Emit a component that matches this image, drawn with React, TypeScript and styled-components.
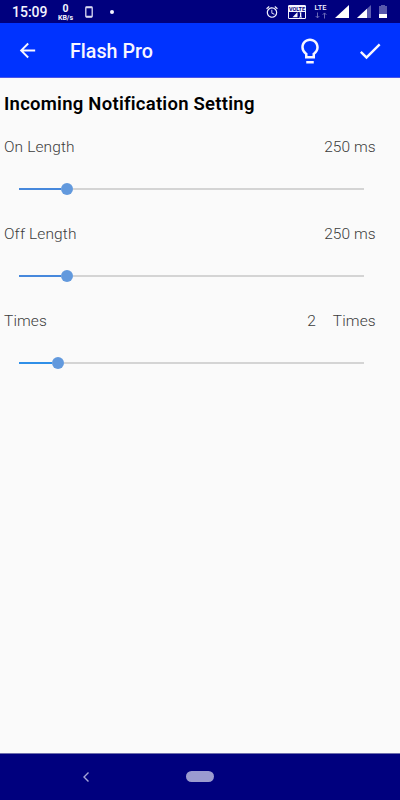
import React from "react";
import styled, { createGlobalStyle } from "styled-components";

const GlobalStyle = createGlobalStyle`
  *, *::before, *::after { box-sizing: border-box; }
  body { margin: 0; background: #fafafa; font-family: Roboto, sans-serif; }
`;

const Screen = styled.div`
  display: flex;
  flex-direction: column;
  width: 400px;
  height: 800px;
  overflow: hidden;
  background: #fafafa;
`;

const StatusBar = styled.header`
  display: flex;
  justify-content: space-between;
  height: 23px;
  padding: 0 13px 0 12px;
  background: #00007e;
  color: #f4f4ff;
`;

const StatusGroup = styled.div`
  display: flex;
  align-items: center;
  height: 23px;
  svg { display: block; flex: none; }
`;

const Clock = styled.span`
  width: 46px;
  font-size: 14px;
  line-height: 23px;
  font-weight: 500;
  padding-top: 2px;
  white-space: nowrap;
`;

const NetSpeed = styled.span`
  display: flex;
  flex-direction: column;
  align-items: center;
  width: 15px;
  font-weight: 700;
  padding-top: 2px;
`;

const NetValue = styled.span`
  font-size: 10.5px;
  line-height: 10px;
`;

const NetUnit = styled.span`
  font-size: 7px;
  line-height: 8px;
`;

const Spacer = styled.span<{ $w: number }>`
  flex: none;
  width: ${(p) => p.$w}px;
`;

const Dot = styled.span`
  width: 4px;
  height: 4px;
  border-radius: 50%;
  background: #f4f4ff;
`;

const Volte = styled.span`
  display: flex;
  flex-direction: column;
  align-items: center;
  width: 18px;
  height: 14px;
  border: 1px solid #f4f4ff;
  border-radius: 1px;
  background: #f4f4ff;
  color: #00007e;
  font-size: 5.5px;
  line-height: 6px;
  font-weight: 700;
`;

const Lte = styled.span`
  display: flex;
  flex-direction: column;
  align-items: center;
  width: 13px;
  font-size: 7.4px;
  line-height: 8px;
  font-weight: 500;
`;

const AppBar = styled.nav`
  display: flex;
  align-items: center;
  height: 55px;
  padding: 2px 16px 0 16px;
  background: #0033ff;
  border-bottom: 1px solid #4a55e8;
  color: #f8f6ff;
  svg { display: block; flex: none; }
`;

const BackButton = styled.button`
  display: block;
  margin-top: -2px;
  padding: 0;
  border: 0;
  background: none;
  color: inherit;
`;

const Title = styled.h1`
  flex: 1;
  margin: 1px 0 0 31px;
  font-size: 19.7px;
  line-height: 24px;
  font-weight: 500;
`;

const IconButton = styled.button`
  display: block;
  padding: 0;
  border: 0;
  background: none;
  color: inherit;
  & + & { margin-left: 31px; }
`;

const Content = styled.main`
  flex: 1;
  padding: 14px 0 0 4px;
`;

const Heading = styled.h2`
  margin: 0;
  font-size: 18.5px;
  line-height: 24px;
  font-weight: 600;
  letter-spacing: 0.25px;
  color: #000;
  white-space: nowrap;
`;

const Setting = styled.section`
  height: 86.7px;
  padding-top: 21.2px;
`;

const SettingLabel = styled.div`
  display: flex;
  justify-content: space-between;
  padding-right: 24.2px;
  font-size: 15.5px;
  line-height: 20px;
  font-weight: 300;
  letter-spacing: 0.12px;
  color: #3c3c3c;
`;

const Amount = styled.span<{ $gap: number }>`
  display: flex;
  gap: ${(p) => p.$gap}px;
`;

const Slider = styled.div`
  display: flex;
  align-items: center;
  width: 345px;
  height: 12px;
  margin: 26.1px 0 0 15px;
`;

const Fill = styled.div<{ $bright?: boolean }>`
  height: 2px;
  background: ${(p) => (p.$bright ? "#2f8fe8" : "#4688dc")};
`;

const Thumb = styled.div`
  width: 12px;
  height: 12px;
  border-radius: 50%;
  background: #6299dd;
`;

const Rest = styled.div`
  flex: 1;
  height: 2px;
  background: #d4d4d4;
`;

const NavBar = styled.footer`
  display: flex;
  align-items: center;
  height: 47px;
  padding-left: 82px;
  background: #00007e;
  border-top: 1px solid #6e6eac;
`;

const HomePill = styled.span`
  width: 28px;
  height: 11px;
  margin: -1px 0 0 96px;
  border-radius: 6px;
  background: #9b9bd0;
`;

const settings = [
  { label: "On Length", value: "250", unit: "ms", gap: 3.7, position: 41.5, bright: false },
  { label: "Off Length", value: "250", unit: "ms", gap: 3.7, position: 41.5, bright: false },
  { label: "Times", value: "2", unit: "Times", gap: 17, position: 32.5, bright: true },
];

export default function App() {
  return (
    <Screen>
      <GlobalStyle />
      <StatusBar>
        <StatusGroup>
          <Clock>15:09</Clock>
          <NetSpeed>
            <NetValue>0</NetValue>
            <NetUnit>KB/s</NetUnit>
          </NetSpeed>
          <Spacer $w={12} />
          <svg width="8" height="12" viewBox="0 0 8 12">
            <rect x="0.8" y="1" width="6.4" height="10" rx="0.8" fill="none" stroke="#d9d9f2" strokeWidth="1.3" />
            <path d="M1 1.4h6M1 10.4h6" stroke="#d9d9f2" strokeWidth="1.5" />
          </svg>
          <Spacer $w={17} />
          <Dot />
        </StatusGroup>
        <StatusGroup>
          <svg width="14" height="14" viewBox="0 0 24 24" fill="#f4f4ff">
            <path d="M22 5.72l-4.6-3.86-1.29 1.53 4.6 3.86L22 5.72zM7.88 3.39L6.6 1.86 2 5.71l1.29 1.53 4.59-3.85zM12.5 8H11v6l4.75 2.85.75-1.23-4-2.37V8zM12 4c-4.97 0-9 4.03-9 9s4.02 9 9 9a9 9 0 1 0 0-18zm0 16c-3.87 0-7-3.13-7-7s3.13-7 7-7 7 3.13 7 7-3.13 7-7 7z" />
          </svg>
          <Spacer $w={9} />
          <Volte>
            VOLTE
            <svg width="16" height="6" viewBox="0 0 16 6">
              <path fill="#00007e" d="M0 0h16v6H0z" />
              <path fill="#f4f4ff" d="M3.5 5.3 8.5 0v5.3zM10 1l1.5-.7h.8v4.4H13v.8h-3v-.8h1V1.3z" />
            </svg>
          </Volte>
          <Spacer $w={8} />
          <Lte>
            LTE
            <svg width="12" height="7" viewBox="0 0 12 7" fill="none" stroke="#6868b5">
              <path d="M2.5 0.5v5.5M.7 4l1.8 1.9L4.3 4M9.5 6.5V1M7.7 2.8 9.5.9l1.8 1.9" />
            </svg>
          </Lte>
          <Spacer $w={8} />
          <svg width="14" height="13" viewBox="0 0 14 13">
            <path fill="#fff" d="M0 13 14 0v13z" />
          </svg>
          <Spacer $w={8} />
          <svg width="14" height="13" viewBox="0 0 14 13">
            <path fill="#5c5cae" d="M0 13 14 0v13z" />
            <path fill="#fff" d="M0 13 10 3.7V13z" />
          </svg>
          <Spacer $w={8} />
          <svg width="8" height="13" viewBox="0 0 8 13">
            <path fill="#5757ac" d="M2 0h4v1h2v8H0V1h2z" />
            <path fill="#fff" d="M0 9h8v4H0z" />
          </svg>
        </StatusGroup>
      </StatusBar>
      <AppBar>
        <BackButton aria-label="Back">
          <svg width="23" height="23" viewBox="0 0 24 24" fill="currentColor">
            <path d="M20 11H7.83l5.59-5.59L12 4l-8 8 8 8 1.41-1.41L7.83 13H20v-2z" />
          </svg>
        </BackButton>
        <Title>Flash Pro</Title>
        <IconButton aria-label="Preview light">
          <svg width="30" height="30" viewBox="0 0 24 24" fill="currentColor">
            <path d="M9 22h6v-2H9zm3-20C8.14 2 5 5.14 5 9c0 2.38 1.19 4.47 3 5.74V18h8v-3.26c1.81-1.27 3-3.36 3-5.74 0-3.86-3.14-7-7-7zm2.85 11.1l-.85.6V16h-4v-2.3l-.85-.6A4.997 4.997 0 0 1 7 9c0-2.76 2.24-5 5-5s5 2.24 5 5c0 1.63-.8 3.16-2.15 4.1z" />
          </svg>
        </IconButton>
        <IconButton aria-label="Confirm">
          <svg width="28" height="28" viewBox="0 0 24 24" fill="currentColor">
            <path d="M9 16.17 4.83 12l-1.42 1.41L9 19 21 7l-1.41-1.41z" />
          </svg>
        </IconButton>
      </AppBar>
      <Content>
        <Heading>Incoming Notification Setting</Heading>
        {settings.map((s) => (
          <Setting key={s.label}>
            <SettingLabel>
              <span>{s.label}</span>
              <Amount $gap={s.gap}>
                <span>{s.value}</span>
                <span>{s.unit}</span>
              </Amount>
            </SettingLabel>
            <Slider>
              <Fill $bright={s.bright} style={{ width: s.position }} />
              <Thumb />
              <Rest />
            </Slider>
          </Setting>
        ))}
      </Content>
      <NavBar>
        <svg width="8" height="12" viewBox="0 0 8 12" fill="none" stroke="#a5a5d8" strokeWidth="1.4">
          <path d="M6.5 1.5 2 6l4.5 4.5" />
        </svg>
        <HomePill />
      </NavBar>
    </Screen>
  );
}
